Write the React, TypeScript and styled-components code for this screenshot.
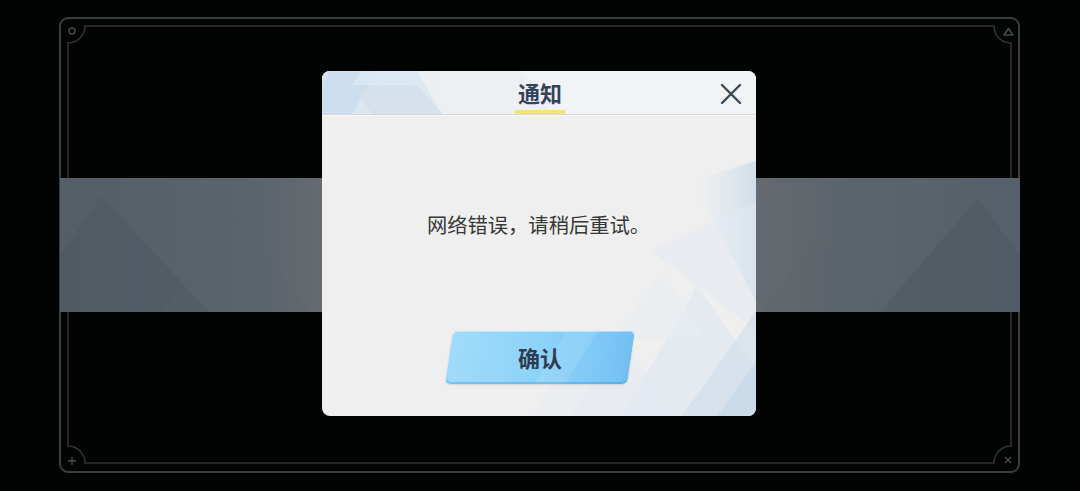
import React from 'react'
import styled, { createGlobalStyle } from 'styled-components'

const FONT = `"Noto Sans CJK SC", "Noto Sans", sans-serif`

const GlobalStyle = createGlobalStyle`
  html, body {
    margin: 0;
    padding: 0;
    background: #000;
  }
  body {
    font-family: ${FONT};
  }
`

const Page = styled.div`
  width: 1080px;
  height: 491px;
  box-sizing: border-box;
  padding: 17px 60px 18px 59px;
  background: #020303;
  overflow: hidden;
`

const Frame = styled.div`
  position: relative;
  width: 100%;
  height: 100%;
  display: grid;
  grid-template: 1fr / 1fr;
  justify-items: center;
`

const Ornament = styled.svg`
  position: absolute;
  inset: 0;
  width: 100%;
  height: 100%;
  pointer-events: none;
`

const Band = styled.div`
  position: relative;
  grid-area: 1 / 1;
  align-self: center;
  justify-self: stretch;
  margin-left: 1px;
  height: 134px;
  background: linear-gradient(
    90deg,
    #545e67 0%,
    #5b646c 20%,
    #666b70 28%,
    #646a70 72%,
    #5c646b 82%,
    #56606a 100%
  );
  overflow: hidden;
`

const BandArt = styled.svg`
  position: absolute;
  inset: 0;
  width: 100%;
  height: 100%;
`

const Dialog = styled.div`
  position: relative;
  grid-area: 1 / 1;
  align-self: start;
  margin-top: 54px;
  margin-right: 2px;
  width: 434px;
  height: 345px;
  border-radius: 8px;
  background: #efefef;
  overflow: hidden;
  display: flex;
  flex-direction: column;
`

const DialogArt = styled.svg`
  position: absolute;
  inset: 0;
  width: 100%;
  height: 100%;
`

const Header = styled.div`
  position: relative;
  height: 43px;
  flex: none;
  display: flex;
  align-items: center;
  justify-content: center;
  padding-left: 3px;
  border-bottom: 1px solid #d5d7da;
  box-shadow: 0 1px 0 #f7f7f7;
`

const Title = styled.div`
  position: relative;
  font-size: 22px;
  font-weight: 700;
  color: #34435a;
  line-height: 30px;
  margin-top: -2px;
  padding: 0 3px;
  &::after {
    content: '';
    position: absolute;
    left: 0;
    right: 0;
    bottom: -7px;
    height: 4px;
    background: #f2e46c;
  }
`

const CloseButton = styled.button`
  position: absolute;
  right: 14px;
  top: 12px;
  width: 22px;
  height: 22px;
  padding: 0;
  border: 0;
  background: none;
  display: flex;
  cursor: pointer;
`

const Body = styled.div`
  position: relative;
  flex: 1;
  display: flex;
  flex-direction: column;
  align-items: center;
  padding-top: 97px;
`

const Message = styled.p`
  margin: 0;
  font-size: 20.3px;
  line-height: 24px;
  color: #373737;
`

const ConfirmButton = styled.button`
  margin-top: 95px;
  margin-left: 3px;
  width: 182px;
  height: 53px;
  padding: 0;
  border: 0;
  border-radius: 5px;
  transform: skewX(-8.5deg);
  background:
    linear-gradient(115deg, transparent 55%, rgba(255, 255, 255, 0.1) 55%, rgba(255, 255, 255, 0.1) 70%, transparent 70%),
    linear-gradient(90deg, #a1dbfb 0%, #8fd3f9 45%, #80c9f6 80%, #71bff2 100%);
  box-shadow: inset 0 -2px 0 rgba(60, 140, 200, 0.35), inset 0 1px 0 rgba(255, 255, 255, 0.4), 0 1px 2px rgba(0, 0, 0, 0.12);
  cursor: pointer;
`

const ButtonLabel = styled.span`
  display: block;
  transform: skewX(8.5deg);
  font-family: ${FONT};
  font-size: 22px;
  font-weight: 700;
  color: #2f3d51;
  line-height: 53px;
`

const FrameOrnament = () => (
  <Ornament viewBox="0 0 961 456" preserveAspectRatio="none">
    <rect x="1" y="1" width="959" height="454" rx="8" fill="none" stroke="#3b3c3d" strokeWidth="2" />
    <path
      d="M26 9 H935 A17 17 0 0 0 952 26 V429 A17 17 0 0 0 935 446 H26 A17 17 0 0 0 9 429 V26 A17 17 0 0 0 26 9 Z"
      fill="none"
      stroke="#343536"
      strokeWidth="1.5"
    />
    <circle cx="13" cy="14" r="3" fill="none" stroke="#4a4b4c" strokeWidth="1.5" />
    <path d="M945 18 L949.5 11.5 L954 18 Z" fill="none" stroke="#4a4b4c" strokeWidth="1.5" strokeLinejoin="round" />
    <path d="M13 440 V448 M9 444 H17" stroke="#4a4b4c" strokeWidth="1.3" />
    <path d="M946 440 L952 446 M952 440 L946 446" stroke="#4a4b4c" strokeWidth="1.3" />
  </Ornament>
)

const BandDecor = () => (
  <BandArt viewBox="0 0 960 134" preserveAspectRatio="none">
    <polygon points="-40,134 41,19 150,134" fill="#4c565f" opacity="0.4" />
    <polygon points="100,134 180,40 250,134" fill="#5a636b" opacity="0.25" />
    <polygon points="820,134 918,20 1000,134" fill="#4b555e" opacity="0.4" />
    <polygon points="700,134 760,60 830,134" fill="#59626a" opacity="0.22" />
  </BandArt>
)

const DialogDecor = () => (
  <DialogArt viewBox="0 0 434 345" preserveAspectRatio="none">
    <defs>
      <linearGradient id="hdr" x1="0" y1="0" x2="1" y2="0">
        <stop offset="0" stopColor="#e9eef3" />
        <stop offset="0.35" stopColor="#f2f3f5" />
        <stop offset="1" stopColor="#f2f3f4" />
      </linearGradient>
      <linearGradient id="edge" x1="0" y1="0" x2="1" y2="0">
        <stop offset="0" stopColor="#dbe6f0" stopOpacity="0" />
        <stop offset="1" stopColor="#c9d9e8" stopOpacity="0.8" />
      </linearGradient>
    </defs>
    <rect x="0" y="0" width="434" height="43" fill="url(#hdr)" />
    <polygon points="0,0 95,0 120,43 0,43" fill="#d6e4f0" opacity="0.7" />
    <polygon points="8,0 55,0 30,43 0,43 0,12" fill="#c8dced" opacity="0.75" />
    <polygon points="40,0 80,0 100,14 30,14" fill="#dceaf6" opacity="0.8" />
    <polygon points="30,14 95,14 120,43 50,43" fill="#cfdbe6" opacity="0.55" />
    <polygon points="95,0 200,0 230,43 120,43" fill="#e8edf2" opacity="0.5" />

    <polygon points="370,110 434,90 434,230" fill="url(#edge)" />
    <polygon points="330,180 434,130 434,260" fill="#e2eaf2" opacity="0.5" />
    <polygon points="300,345 375,215 434,300 434,345" fill="#dce6f0" opacity="0.6" />
    <polygon points="360,345 434,240 434,345" fill="#ccdbea" opacity="0.55" />
    <polygon points="250,345 300,265 350,345" fill="#e3eaf2" opacity="0.6" />
    <polygon points="290,270 340,200 380,265" fill="#e7edf3" opacity="0.5" />
    <polygon points="210,345 262,262 300,345" fill="#e6ecf2" opacity="0.45" />
    <polygon points="395,345 434,290 434,345" fill="#c3d5e7" opacity="0.55" />
  </DialogArt>
)

const CloseIcon = () => (
  <svg width="22" height="22" viewBox="0 0 22 22">
    <path d="M2 2 L20 20 M20 2 L2 20" stroke="#3b4859" strokeWidth="2.4" strokeLinecap="round" />
  </svg>
)

const App = () => {
  return (
    <>
      <GlobalStyle />
      <Page>
        <Frame>
          <FrameOrnament />
          <Band>
            <BandDecor />
          </Band>
          <Dialog>
            <DialogDecor />
            <Header>
              <Title>通知</Title>
              <CloseButton aria-label="关闭">
                <CloseIcon />
              </CloseButton>
            </Header>
            <Body>
              <Message>网络错误，请稍后重试。</Message>
              <ConfirmButton>
                <ButtonLabel>确认</ButtonLabel>
              </ConfirmButton>
            </Body>
          </Dialog>
        </Frame>
      </Page>
    </>
  )
}

export default App
